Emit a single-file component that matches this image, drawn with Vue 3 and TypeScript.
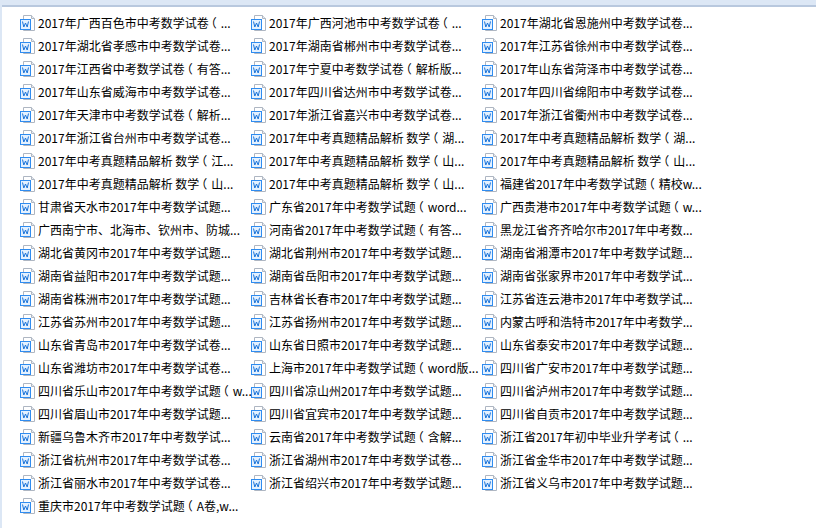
<template>
  <div class="window">
    <div class="file-list">
      <div v-for="name in files" :key="name" class="file">
        <svg class="file-icon" width="16" height="16" viewBox="0 0 16 16">
          <path d="M3.5 0.5H11.5L14.5 3.5V15.5H3.5Z" fill="#fff" stroke="#aeb6c2" />
          <path d="M11.5 0.5V3.5H14.5" fill="#e6eaf0" stroke="#aeb6c2" />
          <rect x="0.5" y="4.5" width="10" height="10" fill="#e4f1ff" stroke="#2f8cf0" />
          <path d="M2.5 6.5L3.8 12L5.5 8L7.2 12L8.5 6.5" fill="none" stroke="#1c74d8" />
        </svg>
        <span class="file-name">
          <template v-for="(part, i) in name.split('（')" :key="i"><span v-if="i" class="paren">（</span>{{ part }}</template>
        </span>
      </div>
    </div>
  </div>
</template>

<script setup lang="ts">
const files: string[] = [
  '2017年广西百色市中考数学试卷（...', '2017年广西河池市中考数学试卷（...', '2017年湖北省恩施州中考数学试卷...',
  '2017年湖北省孝感市中考数学试卷...', '2017年湖南省郴州市中考数学试卷...', '2017年江苏省徐州市中考数学试卷...',
  '2017年江西省中考数学试卷（有答...', '2017年宁夏中考数学试卷（解析版...', '2017年山东省菏泽市中考数学试卷...',
  '2017年山东省威海市中考数学试卷...', '2017年四川省达州市中考数学试卷...', '2017年四川省绵阳市中考数学试卷...',
  '2017年天津市中考数学试卷（解析...', '2017年浙江省嘉兴市中考数学试卷...', '2017年浙江省衢州市中考数学试卷...',
  '2017年浙江省台州市中考数学试卷...', '2017年中考真题精品解析 数学（湖...', '2017年中考真题精品解析 数学（湖...',
  '2017年中考真题精品解析 数学（江...', '2017年中考真题精品解析 数学（山...', '2017年中考真题精品解析 数学（山...',
  '2017年中考真题精品解析 数学（山...', '2017年中考真题精品解析 数学（山...', '福建省2017年中考数学试题（精校w...',
  '甘肃省天水市2017年中考数学试题...', '广东省2017年中考数学试题（word...', '广西贵港市2017年中考数学试题（w...',
  '广西南宁市、北海市、钦州市、防城...', '河南省2017年中考数学试题（有答...', '黑龙江省齐齐哈尔市2017年中考数...',
  '湖北省黄冈市2017年中考数学试题...', '湖北省荆州市2017年中考数学试题...', '湖南省湘潭市2017年中考数学试题...',
  '湖南省益阳市2017年中考数学试题...', '湖南省岳阳市2017年中考数学试题...', '湖南省张家界市2017年中考数学试...',
  '湖南省株洲市2017年中考数学试题...', '吉林省长春市2017年中考数学试题...', '江苏省连云港市2017年中考数学试...',
  '江苏省苏州市2017年中考数学试题...', '江苏省扬州市2017年中考数学试题...', '内蒙古呼和浩特市2017年中考数学...',
  '山东省青岛市2017年中考数学试卷...', '山东省日照市2017年中考数学试题...', '山东省泰安市2017年中考数学试题...',
  '山东省潍坊市2017年中考数学试卷...', '上海市2017年中考数学试题（word版...', '四川省广安市2017年中考数学试题...',
  '四川省乐山市2017年中考数学试题（w...', '四川省凉山州2017年中考数学试题...', '四川省泸州市2017年中考数学试题...',
  '四川省眉山市2017年中考数学试题...', '四川省宜宾市2017年中考数学试题...', '四川省自贡市2017年中考数学试题...',
  '新疆乌鲁木齐市2017年中考数学试...', '云南省2017年中考数学试题（含解...', '浙江省2017年初中毕业升学考试（...',
  '浙江省杭州市2017年中考数学试卷...', '浙江省湖州市2017年中考数学试卷...', '浙江省金华市2017年中考数学试题...',
  '浙江省丽水市2017年中考数学试卷...', '浙江省绍兴市2017年中考数学试题...', '浙江省义乌市2017年中考数学试题...',
  '重庆市2017年中考数学试题（A卷,w...',
]
</script>

<style scoped>
.window {
  width: 816px;
  height: 528px;
  box-sizing: border-box;
  background: #dce7f5;
  padding: 5px 0 0 2px;
  overflow: hidden;
}

.file-list {
  height: 100%;
  box-sizing: border-box;
  background: #fff;
  border-top: 2px solid #b8c8de;
  padding: 4px 0 0 18px;
  display: grid;
  grid-template-columns: repeat(3, 231px);
  grid-auto-rows: 23px;
}

.file {
  display: flex;
  align-items: center;
  gap: 2px;
  min-width: 0;
}

.file-icon {
  flex: none;
}

.file-name {
  font-family: "Noto Sans CJK SC", "Liberation Sans", sans-serif;
  font-size: 12px;
  color: #000;
  white-space: nowrap;
}

/* the full-width bracket sits mid-cell in the reference font */
.paren {
  font-feature-settings: "halt";
  padding: 0 4px 0 2px;
}
</style>

<style>
html, body {
  margin: 0;
  overflow: hidden;
}
</style>
